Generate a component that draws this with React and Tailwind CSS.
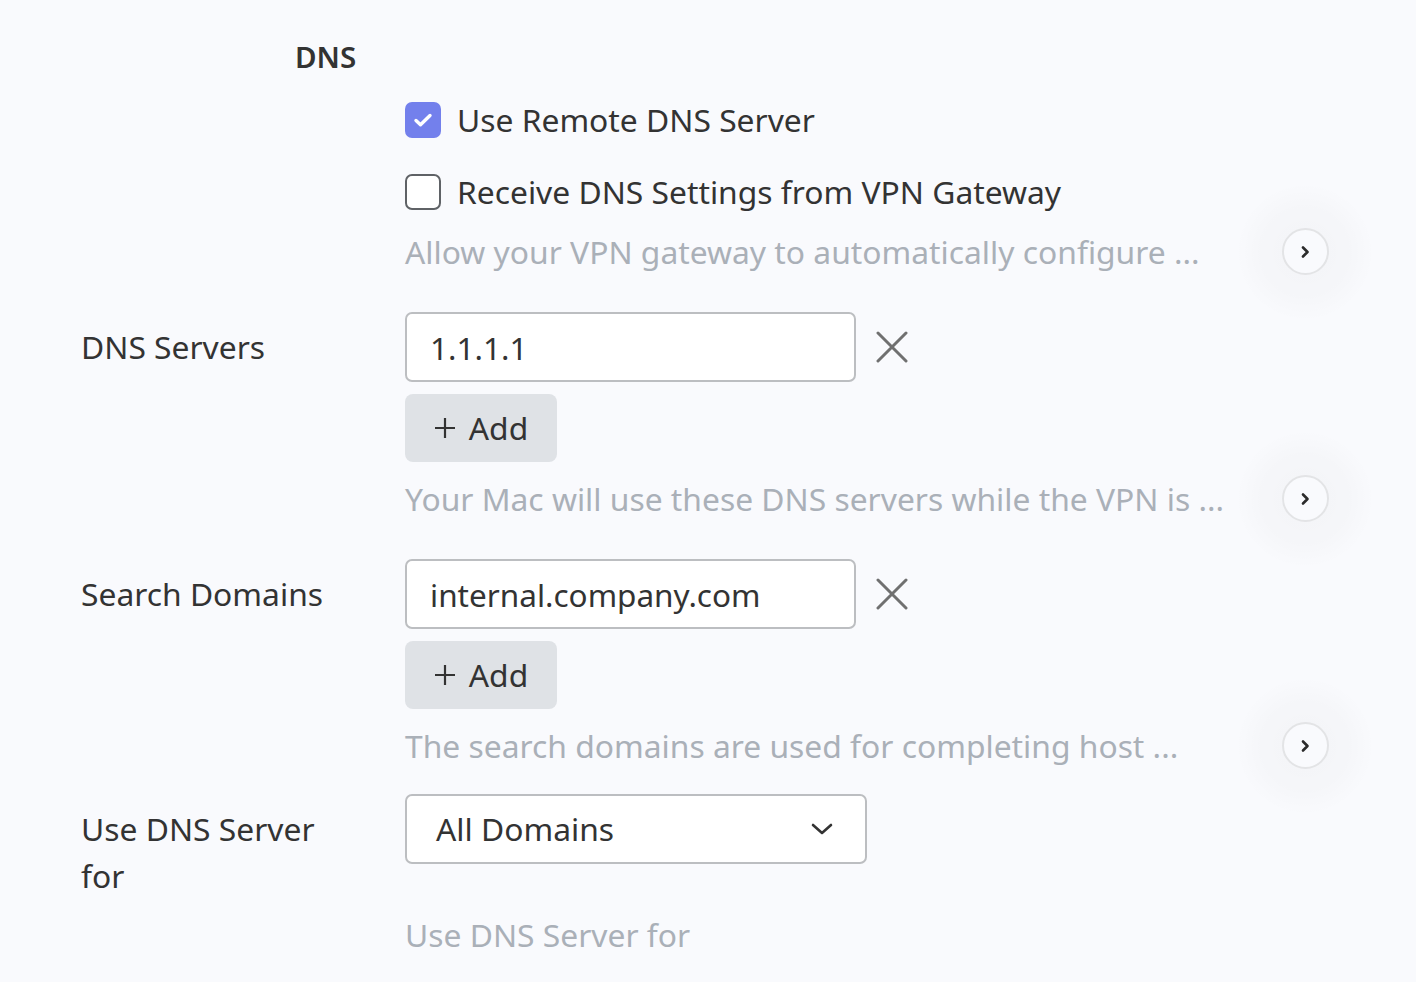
import React, { useState } from 'react';

const font = { fontFamily: '"Noto Sans", "Open Sans", sans-serif' };

function Chevron() {
  return (
    <div className="w-[140px] h-[140px] -my-[47px] -mr-[47px] flex items-center justify-center rounded-full bg-[radial-gradient(circle,rgba(0,0,0,0.025)_0%,rgba(0,0,0,0.015)_45%,rgba(0,0,0,0)_70%)]">
      <button className="w-[47px] h-[47px] rounded-full border-2 border-[#e3e4e6] bg-[#f9fafd] flex items-center justify-center">
        <svg width="14" height="14" viewBox="0 0 14 14" fill="none">
          <path d="M5 2.5l4.5 4.5-4.5 4.5" stroke="#2b2b2b" strokeWidth="2.6" strokeLinecap="round" strokeLinejoin="round" />
        </svg>
      </button>
    </div>
  );
}

function Desc({ text, chevron = true }) {
  return (
    <div className="flex items-center justify-between h-[45px]">
      <span className="text-[31.8px] leading-[45px] text-[#aab0b8] whitespace-nowrap">{text}</span>
      {chevron && <Chevron />}
    </div>
  );
}

function XIcon() {
  return (
    <button className="ml-[20px] w-[32px] h-[32px] flex items-center justify-center">
      <svg width="32" height="32" viewBox="0 0 32 32" fill="none">
        <path d="M2 2l28 28M30 2L2 30" stroke="#707070" strokeWidth="3" strokeLinecap="round" />
      </svg>
    </button>
  );
}

function ListField({ label, value, onChange }) {
  return (
    <div className="grid grid-cols-[324px_1fr]">
      <div className="pt-[11px] text-[31.8px] leading-[47px] text-[#333]">{label}</div>
      <div>
        <div className="flex items-center">
          <input
            value={value}
            onChange={(e) => onChange(e.target.value)}
            className="w-[451px] h-[70px] bg-white border-2 border-[#bcbec1] rounded-[7px] px-[23px] text-[31.5px] text-[#333] outline-none"
          />
          <XIcon />
        </div>
        <button className="mt-[12px] w-[152px] h-[68px] rounded-[8px] bg-[#dfe2e6] text-[31.8px] text-[#333] flex items-center justify-center gap-[13px]">
          <svg width="22" height="22" viewBox="0 0 22 22" fill="none">
            <path d="M11 1v20M1 11h20" stroke="#333" strokeWidth="2.2" />
          </svg>
          <span>Add</span>
        </button>
      </div>
    </div>
  );
}

function Checkbox({ checked, onChange, label }) {
  return (
    <label className="flex items-center h-[45px] cursor-pointer">
      <span
        onClick={onChange}
        className={
          checked
            ? 'w-[36px] h-[36px] shrink-0 rounded-[7px] bg-[#7380ec] flex items-center justify-center'
            : 'w-[36px] h-[36px] shrink-0 rounded-[7px] border-2 border-[#5f6266] bg-white'
        }
      >
        {checked && (
          <svg className="w-[22px] h-[22px]" viewBox="0 0 22 22" fill="none">
            <path d="M4 11.5l4.5 4.2L18 6.5" stroke="white" strokeWidth="3.4" strokeLinecap="round" strokeLinejoin="round" />
          </svg>
        )}
      </span>
      <span className="ml-[16px] text-[31.8px] leading-[45px] text-[#333]">{label}</span>
    </label>
  );
}

export default function App() {
  const [remote, setRemote] = useState(true);
  const [receive, setReceive] = useState(false);
  const [server, setServer] = useState('1.1.1.1');
  const [domain, setDomain] = useState('internal.company.com');

  return (
    <div className="min-h-screen bg-[#f9fafd] pl-[81px] pr-[88px] pt-[34px] overflow-hidden" style={font}>
      <h2 className="ml-[214px] text-[29.5px] leading-[45px] font-semibold text-[#333]">DNS</h2>

      <div className="grid grid-cols-[324px_1fr] mt-[18px]">
        <div />
        <div>
          <Checkbox checked={remote} onChange={() => setRemote(!remote)} label="Use Remote DNS Server" />
          <div className="mt-[27px]">
            <Checkbox checked={receive} onChange={() => setReceive(!receive)} label="Receive DNS Settings from VPN Gateway" />
          </div>
          <div className="mt-[15px]">
            <Desc text="Allow your VPN gateway to automatically configure ..." />
          </div>
        </div>
      </div>

      <div className="mt-[38px]">
        <ListField label="DNS Servers" value={server} onChange={setServer} />
      </div>
      <div className="grid grid-cols-[324px_1fr] mt-[14px]">
        <div />
        <Desc text="Your Mac will use these DNS servers while the VPN is ..." />
      </div>

      <div className="mt-[38px]">
        <ListField label="Search Domains" value={domain} onChange={setDomain} />
      </div>
      <div className="grid grid-cols-[324px_1fr] mt-[14px]">
        <div />
        <Desc text="The search domains are used for completing host ..." />
      </div>

      <div className="grid grid-cols-[324px_1fr] mt-[26px]">
        <div className="pt-[11px] text-[31.8px] leading-[47px] text-[#333] w-[270px]">Use DNS Server for</div>
        <div>
          <button className="w-[462px] h-[70px] bg-white border-2 border-[#bcbec1] rounded-[7px] pl-[29px] pr-[32px] flex items-center justify-between text-[31.8px] text-[#333]">
            <span>All Domains</span>
            <svg width="22" height="14" viewBox="0 0 22 14" fill="none">
              <path d="M2 3l9 8 9-8" stroke="#333" strokeWidth="2.6" strokeLinecap="round" strokeLinejoin="round" />
            </svg>
          </button>
        </div>
      </div>
      <div className="grid grid-cols-[324px_1fr] mt-[13px]">
        <div />
        <Desc text="Use DNS Server for" chevron={false} />
      </div>
    </div>
  );
}
